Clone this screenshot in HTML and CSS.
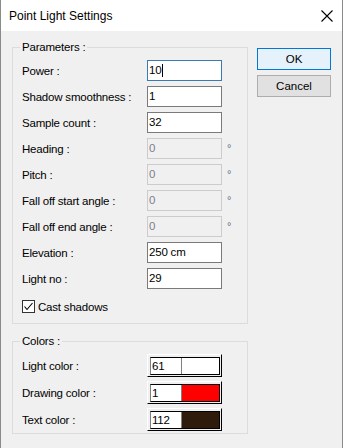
FILE: index.html
```html
<!DOCTYPE html>
<html>
<head>
<meta charset="utf-8">
<link rel="stylesheet" href="styles.css">
</head>
<body>
<div class="window">
  <div class="titlebar">
    <span class="title">Point Light Settings</span>
    <svg class="close" width="12" height="12" viewBox="0 0 12 12"><path d="M0.5 0.5 L11.5 11.5 M11.5 0.5 L0.5 11.5" stroke="#000" stroke-width="1.1" fill="none"/></svg>
  </div>
  <div class="content">
    <div class="left">
      <fieldset class="group params">
        <legend>Parameters :</legend>
        <div class="row"><label>Power :</label><div class="field focus">10<span class="caret"></span></div></div>
        <div class="row"><label>Shadow smoothness :</label><div class="field">1</div></div>
        <div class="row"><label>Sample count :</label><div class="field">32</div></div>
        <div class="row"><label>Heading :</label><div class="field disabled">0</div><span class="deg">°</span></div>
        <div class="row"><label>Pitch :</label><div class="field disabled">0</div><span class="deg">°</span></div>
        <div class="row"><label>Fall off start angle :</label><div class="field disabled">0</div><span class="deg">°</span></div>
        <div class="row"><label>Fall off end angle :</label><div class="field disabled">0</div><span class="deg">°</span></div>
        <div class="row"><label>Elevation :</label><div class="field">250 cm</div></div>
        <div class="row"><label>Light no :</label><div class="field">29</div></div>
        <div class="check">
          <span class="box"><svg width="11" height="11" viewBox="0 0 11 11"><path d="M1.5 5.5 L4 8.5 L9.5 2" stroke="#000" stroke-width="1.1" fill="none"/></svg></span>
          <span>Cast shadows</span>
        </div>
      </fieldset>
      <fieldset class="group colors">
        <legend>Colors :</legend>
        <div class="crow"><label>Light color :</label><div class="swatch"><div class="inner"><span class="num">61</span><span class="col" style="background:#ffffff"></span></div></div></div>
        <div class="crow"><label>Drawing color :</label><div class="swatch"><div class="inner"><span class="num">1</span><span class="col" style="background:#ff0000"></span></div></div></div>
        <div class="crow"><label>Text color :</label><div class="swatch"><div class="inner"><span class="num">112</span><span class="col" style="background:#2e1b0c"></span></div></div></div>
      </fieldset>
    </div>
    <div class="right">
      <button class="btn default">OK</button>
      <button class="btn">Cancel</button>
    </div>
  </div>
</div>
</body>
</html>
```

FILE: styles.css
```css
html, body {
  margin: 0;
  padding: 0;
}
body {
  font-family: "Liberation Sans", Arial, sans-serif;
  font-size: 11.5px;
  letter-spacing: -0.2px;
  color: #000;
  background: #f0f0f0;
}
.window {
  width: 343px;
  height: 448px;
  box-sizing: border-box;
  border-left: 1px solid #8a8a8a;
  border-right: 1px solid #8a8a8a;
  background: #f0f0f0;
  overflow: hidden;
}
.titlebar {
  height: 31px;
  background: #fff;
  display: flex;
  align-items: center;
  justify-content: space-between;
  padding: 0 9px 0 8px;
}
.title {
  font-size: 12px;
  letter-spacing: 0;
  line-height: 16px;
  padding-top: 1px;
}
.close {
  display: block;
}
.content {
  display: flex;
  padding: 9px 0 0 11px;
  gap: 9px;
}
.left {
  width: 236px;
  display: flex;
  flex-direction: column;
  gap: 10px;
}
.group {
  margin: 0;
  border: 1px solid #dcdcdc;
  padding: 5px 0 0 9px;
  min-width: 0;
}
.group legend {
  margin-left: -2px;
  padding: 0 2px;
  line-height: 15px;
}
.params {
  padding-bottom: 10px;
}
.row {
  display: flex;
  align-items: center;
  height: 21px;
  margin-bottom: 5px;
}
.row label {
  width: 125px;
}
.field {
  width: 75px;
  height: 21px;
  box-sizing: border-box;
  border: 1px solid #7a7a7a;
  background: #fff;
  padding: 0 1px;
  line-height: 19px;
  display: flex;
  align-items: center;
}
.field.focus {
  border-color: #3c7ab4;
}
.caret {
  display: inline-block;
  width: 1px;
  height: 13px;
  background: #000;
  margin-left: 1px;
}
.field.disabled {
  background: #f0f0f0;
  border-color: #cccccc;
  color: #7f7f8a;
}
.deg {
  font-size: 11px;
  color: #5b6f8a;
  align-self: flex-start;
  margin-left: 5px;
  margin-top: 4px;
  line-height: 12px;
}
.check {
  display: flex;
  align-items: center;
  gap: 3px;
  height: 13px;
  margin-top: 11px;
}
.check .box {
  width: 13px;
  height: 13px;
  box-sizing: border-box;
  border: 1px solid #333;
  background: #fff;
  display: flex;
  align-items: center;
  justify-content: center;
}
.check .box svg {
  display: block;
}
.colors {
  padding-top: 5px;
  padding-bottom: 2px;
}
.crow {
  display: flex;
  align-items: center;
  height: 23px;
  margin-bottom: 4px;
}
.crow:last-child {
  margin-bottom: 0;
}
.crow label {
  width: 125px;
}
.swatch {
  width: 75px;
  height: 23px;
  box-sizing: border-box;
  border-top: 1px solid #fff;
  border-left: 1px solid #fff;
  border-right: 1px solid #000;
  border-bottom: 1px solid #000;
  padding: 2px 1px 1px 2px;
}
.inner {
  height: 100%;
  box-sizing: border-box;
  border: 1px solid #000;
  border-left-color: #808080;
  display: flex;
}
.num {
  width: 31px;
  background: #fff;
  border-right: 1px solid #808080;
  line-height: 16px;
  padding-left: 1px;
  box-sizing: border-box;
}
.col {
  flex: 1;
}
.right {
  display: flex;
  flex-direction: column;
  gap: 5px;
  padding-top: 8px;
}
.btn {
  width: 74px;
  height: 22px;
  font-family: inherit;
  font-size: 11.5px;
  color: #000;
  border: 1px solid #adadad;
  background: #e1e1e1;
  padding: 0;
  margin: 0;
}
.btn.default {
  border-color: #0078d7;
  background: #e5f1fb;
}
```
